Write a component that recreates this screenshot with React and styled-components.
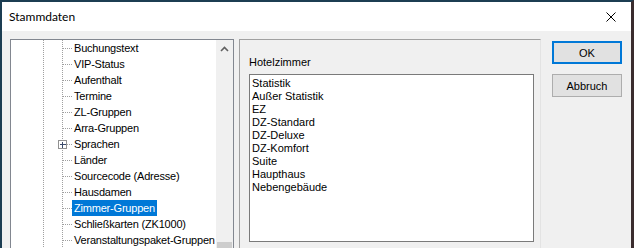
import React from 'react';
import styled, { createGlobalStyle } from 'styled-components';

const GlobalStyle = createGlobalStyle`
  html, body {
    margin: 0;
    padding: 0;
    overflow: hidden;
    background: #1c3d52;
  }
`;

const Window = styled.div`
  width: 634px;
  height: 248px;
  box-sizing: border-box;
  border-left: 2px solid #1c3d52;
  border-top: 2px solid #1c3d52;
  border-right: 3px solid #3a2c2e;
  background: #f0f0f0;
  display: flex;
  flex-direction: column;
  overflow: hidden;
  font-family: "Liberation Sans", Arial, sans-serif;
`;

const TitleBar = styled.div`
  height: 29px;
  flex: none;
  background: #ffffff;
  display: flex;
  align-items: center;
  justify-content: space-between;
  padding: 0 7px 0 7px;
`;

const Title = styled.span`
  font-family: Lato, "Liberation Sans", sans-serif;
  font-size: 12px;
  color: #000;
`;

const CloseIcon = styled.svg`
  width: 10px;
  height: 10px;
  margin-right: 8px;
`;

const Body = styled.div`
  display: flex;
  align-items: flex-start;
  padding: 8px 9px 0 8px;
`;

const TreeBox = styled.div`
  width: 224px;
  height: 261px;
  box-sizing: border-box;
  border: 1px solid #828790;
  background: #fff;
  display: flex;
  flex: none;
`;

const TreeList = styled.div`
  flex: 1;
  display: flex;
  flex-direction: column;
  overflow: hidden;
`;

const Row = styled.div`
  height: 16px;
  display: flex;
  align-items: center;
  font-size: 11px;
  letter-spacing: -0.2px;
  white-space: nowrap;
`;

const Guides = styled.svg`
  width: 61px;
  height: 16px;
  flex: none;
`;

const Label = styled.span`
  padding: 0 2px;
  line-height: 16px;
  color: ${(p) => (p.$selected ? '#fff' : '#000')};
  background: ${(p) => (p.$selected ? '#0078d7' : 'transparent')};
`;

const ScrollBar = styled.div`
  width: 17px;
  flex: none;
  background: #f0f0f0;
  display: flex;
  flex-direction: column;
  align-items: center;
`;

const ScrollButton = styled.div`
  height: 17px;
  width: 17px;
  display: flex;
  align-items: center;
  justify-content: center;
`;

const Track = styled.div`
  flex: 1;
  display: flex;
  flex-direction: column;
  justify-content: flex-end;
`;

const Thumb = styled.div`
  width: 15px;
  height: 40px;
  background: #cdcdcd;
`;

const Panel = styled.div`
  width: 302px;
  height: 230px;
  box-sizing: border-box;
  margin-left: 5px;
  flex: none;
  border-left: 1px solid #a0a0a0;
  border-top: 1px solid #a0a0a0;
  border-right: 1px solid #e3e3e3;
  padding: 15px 6px 0 9px;
  display: flex;
  flex-direction: column;
`;

const PanelLabel = styled.div`
  font-size: 11px;
  line-height: 14px;
  color: #000;
  margin-bottom: 5px;
`;

const ListBox = styled.div`
  height: 168px;
  box-sizing: border-box;
  border: 1px solid #7a7a7a;
  background: #fff;
  padding: 2px 2px;
`;

const ListItem = styled.div`
  font-size: 11px;
  line-height: 13px;
  color: #000;
  white-space: nowrap;
`;

const ButtonColumn = styled.div`
  margin-left: 11px;
  margin-top: 2px;
  display: flex;
  flex-direction: column;
  gap: 10px;
`;

const Button = styled.button`
  width: 70px;
  height: 23px;
  box-sizing: border-box;
  padding: 0;
  background: #e1e1e1;
  border: ${(p) => (p.$default ? '2px solid #0078d7' : '1px solid #adadad')};
  font-family: "Liberation Sans", Arial, sans-serif;
  font-size: 11px;
  color: #000;
  outline: none;
`;

const treeItems = [
  { text: 'Buchungstext' },
  { text: 'VIP-Status' },
  { text: 'Aufenthalt' },
  { text: 'Termine' },
  { text: 'ZL-Gruppen' },
  { text: 'Arra-Gruppen' },
  { text: 'Sprachen', expandable: true },
  { text: 'Länder' },
  { text: 'Sourcecode (Adresse)' },
  { text: 'Hausdamen' },
  { text: 'Zimmer-Gruppen', selected: true },
  { text: 'Schließkarten (ZK1000)' },
  { text: 'Veranstaltungspaket-Gruppen' },
];

const roomItems = [
  'Statistik',
  'Außer Statistik',
  'EZ',
  'DZ-Standard',
  'DZ-Deluxe',
  'DZ-Komfort',
  'Suite',
  'Haupthaus',
  'Nebengebäude',
];

const TreeGuides = ({ expandable }) => (
  <Guides viewBox="0 0 61 16" shapeRendering="crispEdges">
    <line x1="32.5" y1="0" x2="32.5" y2="16" stroke="#a0a0a0" strokeDasharray="1 1" />
    <line x1="51.5" y1="0" x2="51.5" y2="16" stroke="#a0a0a0" strokeDasharray="1 1" />
    <line x1="52" y1="8.5" x2="61" y2="8.5" stroke="#a0a0a0" strokeDasharray="1 1" />
    {expandable && (
      <g>
        <rect x="47.5" y="4.5" width="8" height="8" fill="#fff" stroke="#919191" />
        <line x1="49" y1="8.5" x2="55" y2="8.5" stroke="#3a4a6a" />
        <line x1="51.5" y1="6" x2="51.5" y2="12" stroke="#3a4a6a" />
      </g>
    )}
  </Guides>
);

export default function App() {
  return (
    <>
      <GlobalStyle />
      <Window>
        <TitleBar>
          <Title>Stammdaten</Title>
          <CloseIcon viewBox="0 0 10 10">
            <path d="M0.5 0.5 L9.5 9.5 M9.5 0.5 L0.5 9.5" stroke="#000" strokeWidth="1" fill="none" />
          </CloseIcon>
        </TitleBar>
        <Body>
          <TreeBox>
            <TreeList>
              {treeItems.map((item) => (
                <Row key={item.text}>
                  <TreeGuides expandable={item.expandable} />
                  <Label $selected={item.selected}>{item.text}</Label>
                </Row>
              ))}
            </TreeList>
            <ScrollBar>
              <ScrollButton>
                <svg width="9" height="6" viewBox="0 0 9 6">
                  <path d="M1 5 L4.5 1.5 L8 5" stroke="#606060" strokeWidth="1.6" fill="none" />
                </svg>
              </ScrollButton>
              <Track>
                <Thumb />
              </Track>
              <ScrollButton />
            </ScrollBar>
          </TreeBox>
          <Panel>
            <PanelLabel>Hotelzimmer</PanelLabel>
            <ListBox>
              {roomItems.map((r) => (
                <ListItem key={r}>{r}</ListItem>
              ))}
            </ListBox>
          </Panel>
          <ButtonColumn>
            <Button $default>OK</Button>
            <Button>Abbruch</Button>
          </ButtonColumn>
        </Body>
      </Window>
    </>
  );
}
